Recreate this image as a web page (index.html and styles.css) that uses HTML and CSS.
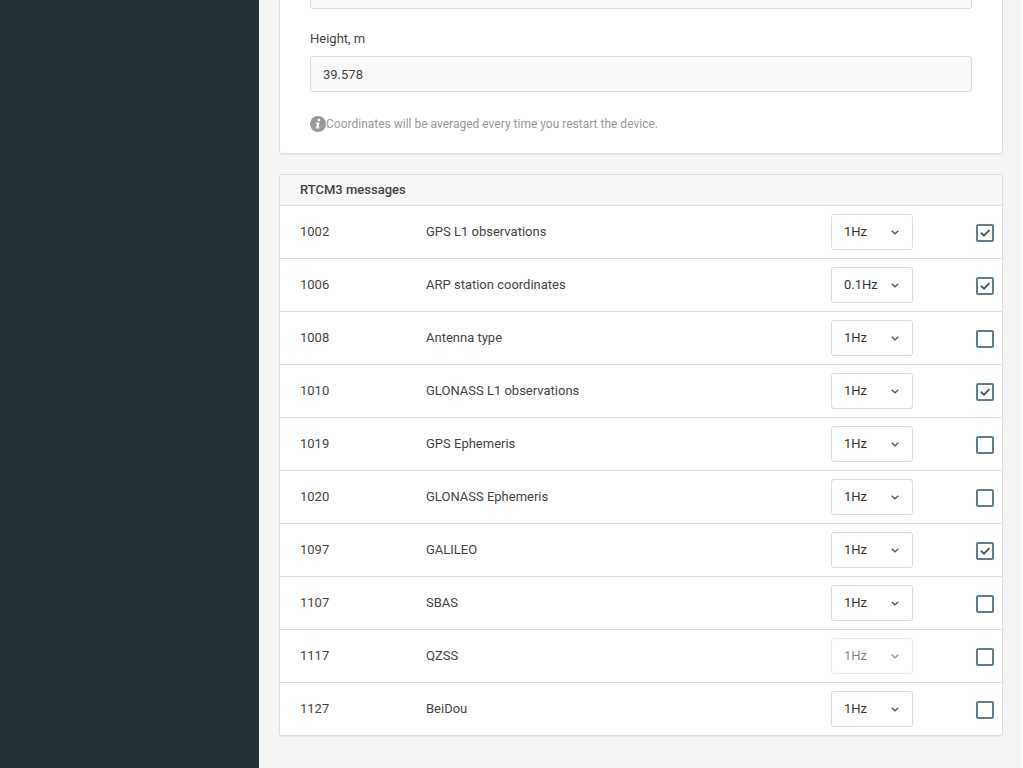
FILE: index.html
```html
<!DOCTYPE html>
<html lang="en">
<head>
<meta charset="utf-8">
<title>Base mode</title>
<link rel="stylesheet" href="styles.css">
</head>
<body>
<div class="app">
  <aside class="sidebar"></aside>
  <main class="content">
    <section class="card coordinates">
      <input class="field" type="text" aria-label="Longitude" readonly>
      <label class="label" for="height">Height, m</label>
      <input class="field" id="height" type="text" value="39.578" readonly>
      <p class="hint">
        <svg class="info" viewBox="0 0 16 16" aria-hidden="true"><circle cx="8" cy="8" r="8" fill="#999"/><circle cx="8.9" cy="4.1" r="1.3" fill="#fff"/><path d="M6 6.5h3.6L8.5 11.4h1.2l-.3 1.2H5.9l1.1-4.9H5.7z" fill="#fff"/></svg>
        <span>Coordinates will be averaged every time you restart the device.</span>
      </p>
    </section>
    <section class="card messages">
      <h2 class="title">RTCM3 messages</h2>
      <table class="table">
        <tbody id="rows"></tbody>
      </table>
    </section>
  </main>
</div>
<script src="app.js"></script>
</body>
</html>
```
FILE: app.js
```
const messages = [
  ["1002", "GPS L1 observations", "1Hz", true],
  ["1006", "ARP station coordinates", "0.1Hz", true],
  ["1008", "Antenna type", "1Hz", false],
  ["1010", "GLONASS L1 observations", "1Hz", true],
  ["1019", "GPS Ephemeris", "1Hz", false],
  ["1020", "GLONASS Ephemeris", "1Hz", false],
  ["1097", "GALILEO", "1Hz", true],
  ["1107", "SBAS", "1Hz", false],
  ["1117", "QZSS", "1Hz", false, true],
  ["1127", "BeiDou", "1Hz", false]
];

document.getElementById("rows").innerHTML = messages.map(([id, name, rate, on, locked]) => `
  <tr>
    <td class="code">${id}</td>
    <td class="name" id="name-${id}">${name}</td>
    <td class="rate">
      <div class="picker${locked ? " locked" : ""}">
        <select class="select" aria-label="${name} rate"${locked ? " disabled" : ""}><option>${rate}</option></select>
        <svg class="arrow" viewBox="0 0 8 5" aria-hidden="true"><path d="M.7.7 4 3.8 7.3.7" fill="none" stroke="#555" stroke-width="1.3"/></svg>
      </div>
    </td>
    <td class="toggle">
      <label class="tick">
        <input class="box" type="checkbox" aria-labelledby="name-${id}"${on ? " checked" : ""}>
        <svg class="mark" viewBox="0 0 18 18" aria-hidden="true"><path d="M5 8.8 8 11.6 13.4 6.2" fill="none" stroke="#455a64" stroke-width="1.9"/></svg>
      </label>
    </td>
  </tr>`).join("");
```
FILE: styles.css
```css
* {
  box-sizing: border-box;
}

body {
  margin: 0;
  color: #444;
  background: #f4f4f4;
  font: 13px/20px Roboto, sans-serif;
}

.app {
  display: flex;
  height: 100vh;
  overflow: hidden;
  border-right: 2px solid #fff;
}

.sidebar {
  flex: 0 0 259px;
  background: #263238;
}

.content {
  flex: 1;
  min-width: 0;
  padding: 0 18px 0 20px;
}

.card {
  background: #fff;
  border: 1px solid #ddd;
  border-radius: 3px;
  box-shadow: 0 1px 1px rgba(0, 0, 0, 0.05);
}

.coordinates {
  margin: -48px 0 20px;
  padding: 20px 30px 19px;
}

.field {
  display: block;
  width: 100%;
  height: 36px;
  padding: 0 12px;
  color: #444;
  background: #fafafa;
  border: 1px solid #ddd;
  border-radius: 3px;
  font: inherit;
}

.label {
  display: block;
  margin: 20px 0 7px;
}

.hint {
  display: flex;
  align-items: center;
  margin: 22px 0 0;
  color: #999;
  font-size: 12px;
}

.info {
  width: 16px;
  height: 16px;
}

.title {
  margin: 0;
  padding: 5px 20px;
  background: #f7f7f7;
  border-radius: 2px 2px 0 0;
  font-size: 13px;
  font-weight: 500;
}

.table {
  width: 100%;
  border-collapse: separate;
  border-spacing: 0;
  table-layout: fixed;
}

.table td {
  height: 53px;
  padding: 0;
  border-top: 1px solid #ddd;
}

.table .code {
  width: 146px;
  padding-left: 20px;
}

.table .rate {
  width: 110px;
}

.table .toggle {
  width: 61px;
  padding: 2px 8px 0 0;
}

.picker {
  position: relative;
  width: 82px;
}

.locked {
  opacity: 0.6;
}

.select {
  display: block;
  width: 100%;
  height: 36px;
  padding: 0 12px;
  appearance: none;
  color: #333;
  background: #fff;
  border: 1px solid #ddd;
  border-radius: 3px;
  font: inherit;
  opacity: 1;
}

.arrow {
  position: absolute;
  top: 16px;
  right: 14px;
  width: 8px;
  height: 5px;
  pointer-events: none;
}

.tick {
  position: relative;
  display: block;
  width: 18px;
  height: 18px;
  margin-left: auto;
}

.box {
  display: block;
  width: 18px;
  height: 18px;
  margin: 0;
  appearance: none;
  border: 2px solid #607d8b;
  border-radius: 2px;
}

.mark {
  position: absolute;
  inset: 0;
  visibility: hidden;
}

.box:checked + .mark {
  visibility: visible;
}
```
